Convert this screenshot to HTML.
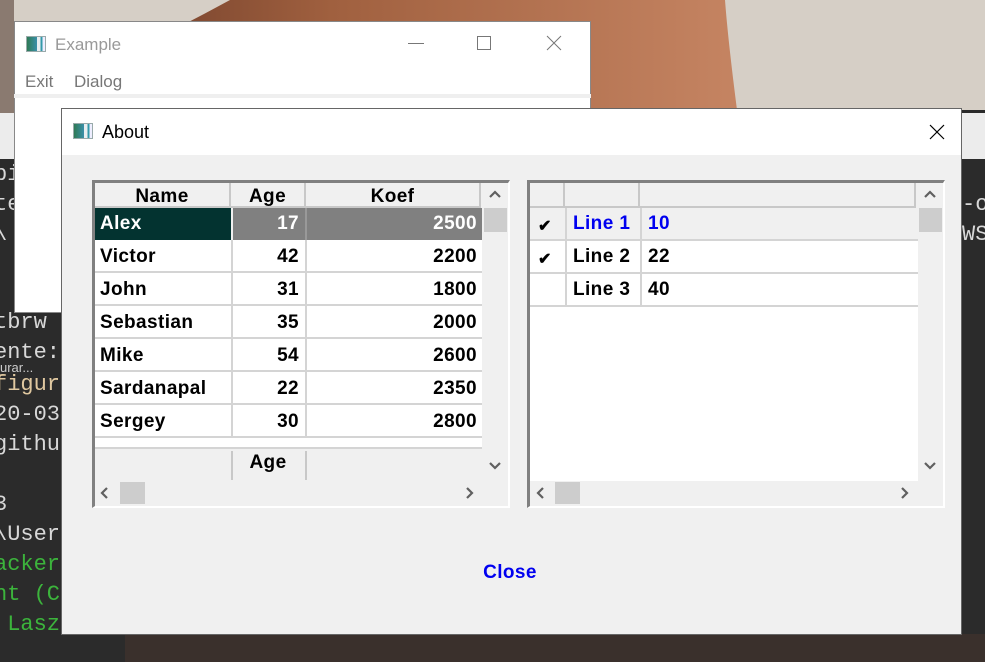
<!DOCTYPE html>
<html><head><meta charset="utf-8"><style>
*{margin:0;padding:0;box-sizing:border-box}
body{width:985px;height:662px;overflow:hidden;position:relative;background:#2a2a2a;font-family:"Liberation Sans",sans-serif}
.a{position:absolute}
.t{position:absolute;font-family:"Liberation Mono",monospace;font-size:22px;color:#d8d8d8;white-space:pre;line-height:30px}
.b{font-weight:bold;font-size:19px;color:#000;position:absolute;white-space:nowrap;line-height:33px;letter-spacing:0.4px}
.hd{position:absolute;background:#f0f0f0;border-right:2px solid #c8c8c8;border-bottom:2px solid #c8c8c8;font-weight:bold;font-size:19px;text-align:center;line-height:28px;letter-spacing:0.4px}
.row{position:absolute;background:#fff;border-bottom:2px solid #d4d4d4}
.vl{position:absolute;width:2px;background:#d4d4d4}
.ic{position:absolute;width:20px;height:16px;border:1px solid #9aa;background:linear-gradient(90deg,#2f7a55 0,#3a8fa8 55%,#e8eef0 55%,#e8eef0 75%,#39a 75%,#39a 85%,#eef 85%)}
</style></head><body>
<div class="a" style="left:0;top:0;width:985px;height:110px;background:#d6cfc6"></div>
<svg class="a" style="left:0;top:0" width="985" height="110"><defs><linearGradient id="g" x1="0" x2="1"><stop offset="0" stop-color="#5a2e20"/><stop offset="0.45" stop-color="#a0603f"/><stop offset="1" stop-color="#c58462"/></linearGradient></defs><path d="M230 0H725Q728 40 737 110H0Q120 60 230 0Z" fill="url(#g)"/></svg>
<div class="a" style="left:0;top:0;width:14px;height:113px;background:#8a7a70"></div>
<div class="a" style="left:0;top:113px;width:985px;height:46px;background:#ececec"></div>
<div class="a" style="left:0;top:159px;width:985px;height:503px;background:#2b2b2b"></div>
<div class="a" style="left:125px;top:634px;width:860px;height:28px;background:#3a302c"></div>
<div class="t" style="left:-6px;top:160px">pi
te
\</div>
<div class="t" style="left:-6px;top:308px">tbrw
ente:</div>
<div class="a" style="left:0;top:360px;font-size:13px;color:#ccc">urar...</div>
<div class="t" style="left:-6px;top:370px;color:#e0c8a0">figur</div>
<div class="t" style="left:-6px;top:400px">20-03
githu

3
\User</div>
<div class="t" style="left:-6px;top:550px;color:#3cb43c">acker
nt (C
 Lasz</div>
<div class="t" style="left:962px;top:190px">-o
WS</div>
<div class="a" style="left:14px;top:21px;width:577px;height:292px;background:#fff;border:1px solid #888"></div>
<div class="a" style="left:14px;top:94px;width:577px;height:4px;background:#efefef"></div>
<div class="ic" style="left:26px;top:36px"></div>
<div class="a" style="left:55px;top:35px;font-size:17px;color:#999">Example</div>
<div class="a" style="left:25px;top:72px;font-size:17px;color:#777">Exit</div>
<div class="a" style="left:74px;top:72px;font-size:17px;color:#777">Dialog</div>
<div class="a" style="left:408px;top:43px;width:16px;height:1px;background:#777"></div>
<div class="a" style="left:477px;top:36px;width:14px;height:14px;border:1px solid #777"></div>
<svg class="a" style="left:546px;top:35px" width="16" height="16"><path d="M1 1L15 15M15 1L1 15" stroke="#777" stroke-width="1"/></svg>
<div class="a" style="left:61px;top:108px;width:901px;height:527px;background:#f0f0f0;border:1px solid #666"></div>
<div class="a" style="left:62px;top:109px;width:899px;height:46px;background:#fff"></div>
<div class="ic" style="left:73px;top:123px"></div>
<div class="a" style="left:102px;top:122px;font-size:18px;color:#000">About</div>
<svg class="a" style="left:929px;top:124px" width="16" height="16"><path d="M1 1L15 15M15 1L1 15" stroke="#000" stroke-width="1.2"/></svg>

<div class="a" style="left:92px;top:180px;width:418px;height:328px;background:#f0f0f0;border-top:3px solid #808080;border-left:3px solid #808080;border-right:2px solid #fff;border-bottom:2px solid #fff"></div>
<div class="hd" style="left:95px;top:183px;width:136px;height:25px">Name</div>
<div class="hd" style="left:231px;top:183px;width:75px;height:25px">Age</div>
<div class="hd" style="left:306px;top:183px;width:175px;height:25px">Koef</div>
<div class="a" style="left:95px;top:208px;width:136px;height:32px;background:#033330"></div>
<div class="a" style="left:233px;top:208px;width:249px;height:32px;background:#808080"></div>
<div class="a" style="left:305px;top:208px;width:2px;height:32px;background:#999"></div>
<div class="b" style="left:100px;top:207px;color:#fff">Alex</div>
<div class="b" style="left:233px;top:207px;width:66px;text-align:right;color:#fff">17</div>
<div class="b" style="left:307px;top:207px;width:170px;text-align:right;color:#fff">2500</div>
<div class="row" style="left:95px;top:240px;width:387px;height:33px"></div>
<div class="row" style="left:95px;top:273px;width:387px;height:33px"></div>
<div class="row" style="left:95px;top:306px;width:387px;height:33px"></div>
<div class="row" style="left:95px;top:339px;width:387px;height:33px"></div>
<div class="row" style="left:95px;top:372px;width:387px;height:33px"></div>
<div class="row" style="left:95px;top:405px;width:387px;height:33px"></div>
<div class="a" style="left:95px;top:438px;width:387px;height:11px;background:#fff;border-bottom:2px solid #d4d4d4"></div>
<div class="vl" style="left:231px;top:240px;height:198px"></div>
<div class="vl" style="left:305px;top:240px;height:198px"></div>
<div class="b" style="left:100px;top:240px">Victor</div><div class="b" style="left:233px;top:240px;width:66px;text-align:right">42</div><div class="b" style="left:307px;top:240px;width:170px;text-align:right">2200</div>
<div class="b" style="left:100px;top:273px">John</div><div class="b" style="left:233px;top:273px;width:66px;text-align:right">31</div><div class="b" style="left:307px;top:273px;width:170px;text-align:right">1800</div>
<div class="b" style="left:100px;top:306px">Sebastian</div><div class="b" style="left:233px;top:306px;width:66px;text-align:right">35</div><div class="b" style="left:307px;top:306px;width:170px;text-align:right">2000</div>
<div class="b" style="left:100px;top:339px">Mike</div><div class="b" style="left:233px;top:339px;width:66px;text-align:right">54</div><div class="b" style="left:307px;top:339px;width:170px;text-align:right">2600</div>
<div class="b" style="left:100px;top:372px">Sardanapal</div><div class="b" style="left:233px;top:372px;width:66px;text-align:right">22</div><div class="b" style="left:307px;top:372px;width:170px;text-align:right">2350</div>
<div class="b" style="left:100px;top:405px">Sergey</div><div class="b" style="left:233px;top:405px;width:66px;text-align:right">30</div><div class="b" style="left:307px;top:405px;width:170px;text-align:right">2800</div>
<div class="a" style="left:95px;top:451px;width:387px;height:30px;background:#f0f0f0"></div>
<div class="vl" style="left:231px;top:451px;height:29px;background:#c8c8c8"></div>
<div class="vl" style="left:305px;top:451px;height:29px;background:#c8c8c8"></div>
<div class="b" style="left:231px;top:448px;width:74px;text-align:center;line-height:30px">Age</div>
<div class="a" style="left:484px;top:208px;width:23px;height:24px;background:#cdcdcd"></div>
<svg class="a" style="left:488px;top:189px" width="14" height="10"><path d="M2 8L7 3L12 8" stroke="#606060" stroke-width="2.2" fill="none"/></svg>
<svg class="a" style="left:488px;top:461px" width="14" height="10"><path d="M2 2L7 7L12 2" stroke="#606060" stroke-width="2.2" fill="none"/></svg>
<div class="a" style="left:120px;top:482px;width:25px;height:22px;background:#cdcdcd"></div>
<svg class="a" style="left:99px;top:486px" width="10" height="14"><path d="M8 2L3 7L8 12" stroke="#606060" stroke-width="2.2" fill="none"/></svg>
<svg class="a" style="left:465px;top:486px" width="10" height="14"><path d="M2 2L7 7L2 12" stroke="#606060" stroke-width="2.2" fill="none"/></svg>

<div class="a" style="left:527px;top:180px;width:418px;height:328px;background:#f0f0f0;border-top:3px solid #808080;border-left:3px solid #808080;border-right:2px solid #fff;border-bottom:2px solid #fff"></div>
<div class="a" style="left:530px;top:208px;width:388px;height:273px;background:#fff"></div>
<div class="hd" style="left:530px;top:183px;width:35px;height:25px"></div>
<div class="hd" style="left:565px;top:183px;width:75px;height:25px"></div>
<div class="hd" style="left:640px;top:183px;width:276px;height:25px"></div>
<div class="row" style="left:530px;top:208px;width:388px;height:33px;background:#f0f0f0"></div>
<div class="row" style="left:530px;top:241px;width:388px;height:33px"></div>
<div class="row" style="left:530px;top:274px;width:388px;height:33px"></div>
<div class="vl" style="left:565px;top:208px;height:97px"></div>
<div class="vl" style="left:640px;top:208px;height:97px"></div>
<div class="b" style="left:538px;top:210px;font-size:16px">✔</div>
<div class="b" style="left:538px;top:243px;font-size:16px">✔</div>
<div class="b" style="left:573px;top:207px;color:#0000f0">Line 1</div><div class="b" style="left:648px;top:207px;color:#0000f0">10</div>
<div class="b" style="left:573px;top:240px">Line 2</div><div class="b" style="left:648px;top:240px">22</div>
<div class="b" style="left:573px;top:273px">Line 3</div><div class="b" style="left:648px;top:273px">40</div>
<div class="a" style="left:919px;top:208px;width:23px;height:24px;background:#cdcdcd"></div>
<svg class="a" style="left:923px;top:189px" width="14" height="10"><path d="M2 8L7 3L12 8" stroke="#606060" stroke-width="2.2" fill="none"/></svg>
<svg class="a" style="left:923px;top:461px" width="14" height="10"><path d="M2 2L7 7L12 2" stroke="#606060" stroke-width="2.2" fill="none"/></svg>
<div class="a" style="left:555px;top:482px;width:25px;height:22px;background:#cdcdcd"></div>
<svg class="a" style="left:535px;top:486px" width="10" height="14"><path d="M8 2L3 7L8 12" stroke="#606060" stroke-width="2.2" fill="none"/></svg>
<svg class="a" style="left:900px;top:486px" width="10" height="14"><path d="M2 2L7 7L2 12" stroke="#606060" stroke-width="2.2" fill="none"/></svg>

<div class="b" style="left:460px;top:556px;width:100px;text-align:center;color:#0000f0">Close</div>
</body></html>
